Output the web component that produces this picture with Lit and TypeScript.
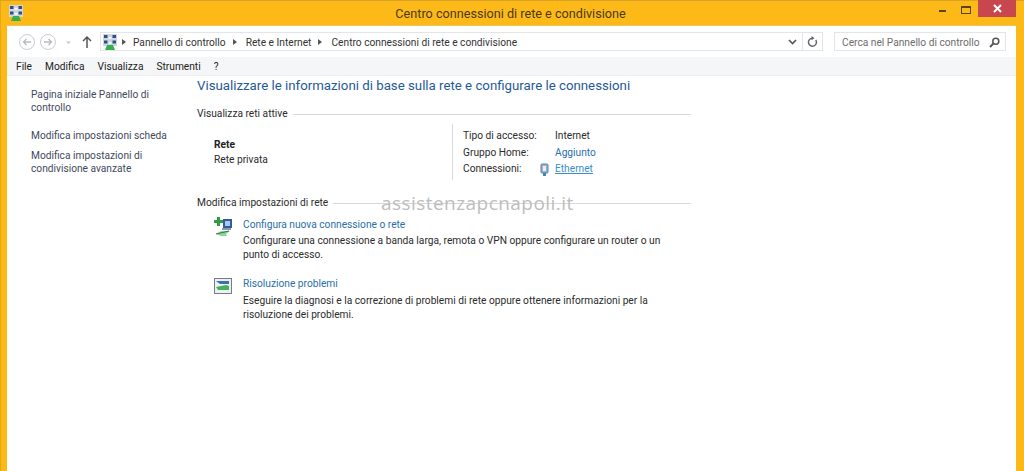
import { LitElement, html, css, svg } from "lit";
import { customElement } from "lit/decorators.js";

const netIcon = svg`<svg width="16" height="16" viewBox="0 0 16 16">
  <rect x="1" y="0" width="14" height="12" fill="#cfd6e2"/>
  <rect x="2" y="1" width="3.5" height="3" fill="#2f4f86"/><rect x="10.5" y="1" width="3.5" height="3" fill="#2f4f86"/>
  <rect x="2" y="6.5" width="3.5" height="3" fill="#2f4f86"/><rect x="10.5" y="6.5" width="3.5" height="3" fill="#2f4f86"/>
  <rect x="6.5" y="3" width="3" height="2" fill="#f2f4f7"/><rect x="6.5" y="8" width="3" height="2" fill="#f2f4f7"/>
  <path d="M5 11h6l2 5H3z" fill="#35b04c"/></svg>`;

@customElement("app-root")
export class AppRoot extends LitElement {
  static styles = css`
    :host { display: block; width: 1024px; height: 471px; overflow: hidden; position: relative;
      background: #fdb917; font-family: Roboto, "Open Sans", sans-serif; font-size: 10.2px; color: #2b2b2b; }
    .frame { display: flex; flex-direction: column; height: 100%; box-shadow: inset 0 1px 0 #d9a32a, inset 1px 0 0 #e3a91c; }
    .titlebar { height: 26px; flex: none; display: grid; grid-template-columns: 1fr auto 1fr; align-items: start; padding: 0 8px 0 7px; }
    .appicon { margin: 5px 0 0 1px; display: block; }
    .title { font-size: 12.65px; line-height: 27px; color: #4a3a10; transform: translateX(-1px); }
    .winbtns { display: flex; justify-content: flex-end; align-items: flex-start; }
    .min { width: 7px; height: 2px; background: #5a4410; margin: 10px 15px 0 0; }
    .max { width: 8px; height: 5px; border: 1px solid #5a4410; border-top-width: 2px; margin: 6px 7px 0 0; }
    .close { width: 38px; height: 17px; background: #c8474f; color: #fff; display: flex; align-items: center; justify-content: center; }
    .window { flex: 1; margin: 0 8px 0 7px; background: #fff; display: flex; flex-direction: column; min-height: 0; box-shadow: 0 -1px 0 #f1c45a; }
    .toolbar { height: 31px; flex: none; display: flex; align-items: center; padding: 0 11px 0 11px; }
    .nav { display: flex; align-items: center; width: 82px; flex: none; }
    .nav svg { display: block; }
    .crumbs { width: 723px; height: 19px; box-sizing: border-box; border: 1px solid #e2e5ea; display: flex; align-items: center; flex: none; }
    .crumbs svg.ni { margin-left: 1px; }
    .crumb { display: flex; align-items: center; white-space: nowrap; color: #333; line-height: 19px; padding-top: 1px; }
    .crumb::before { content: ""; border-left: 4px solid #555; border-top: 3px solid transparent; border-bottom: 3px solid transparent; margin: 0 7px 0 4px; }
    .crumb + .crumb::before { margin: 0 9px 0 7px; }
    .crumbs .spacer { flex: 1; }
    .drop { width: 20px; height: 100%; display: flex; align-items: center; justify-content: center; border-right: 1px solid #e2e5ea; }
    .refresh { width: 19px; display: flex; align-items: center; justify-content: center; }
    .search { margin-left: 11px; width: 172px; height: 19px; box-sizing: border-box; border: 1px solid #e2e5ea; display: flex; align-items: center; justify-content: space-between; padding: 1px 5px 0 7px; color: #6d6d6d; white-space: nowrap; flex: none; }
    .menu { height: 19px; flex: none; background: #f5f6f7; border-bottom: 1px solid #eceef0; display: flex; align-items: center; gap: 13px; padding: 1px 0 0 9px; color: #222; box-sizing: border-box; }
    .main { flex: 1; display: flex; min-height: 0; }
    .side { width: 190px; flex: none; box-sizing: border-box; padding: 12px 10px 0 24px; color: #3e4a5c; line-height: 13px; display: flex; flex-direction: column; }
    .side a:nth-child(2) { margin-top: 15px; }
    .side a:nth-child(3) { margin-top: 7px; }
    .content { width: 494px; flex: none; position: relative; }
    h1 { margin: 0; font-weight: 400; font-size: 13.25px; line-height: 20px; color: #1f5a96; white-space: nowrap; }
    .sect { display: flex; align-items: center; gap: 5px; white-space: nowrap; line-height: 14px; color: #2b2b2b; }
    .sect::after { content: ""; flex: 1; height: 1px; background: #d5d9df; }
    .s1 { margin-top: 11px; }
    .net { display: flex; height: 56px; margin-top: 3px; }
    .netleft { width: 255px; flex: none; padding: 13px 0 0 17px; box-sizing: border-box; line-height: 15px; }
    .netleft b { font-weight: 700; display: block; color: #222; }
    .netright { border-left: 1px solid #d5d9df; padding: 3.6px 0 0 10px; display: grid; grid-template-columns: 92px auto; grid-auto-rows: 16.5px; align-items: center; white-space: nowrap; }
    .blue { color: #2a6fa8; }
    .eth { color: #3a8fc8; text-decoration: underline; position: relative; display: block; }
    .eth svg { position: absolute; left: -15px; top: 0; }
    .s2 { margin-top: 16px; }
    .item { display: flex; margin-left: 16px; }
    .i1 { margin-top: 7px; }
    .i2 { margin-top: 15px; }
    .item svg { flex: none; margin-right: 10px; display: block; }
    .item .t { color: #2a6fa8; line-height: 16px; }
    .item p { margin: 1px 0 0; line-height: 13.5px; width: 425px; color: #2b2b2b; }
    .i2 p { margin-top: 2px; }
    .mark { position: absolute; left: 184px; top: 114px; font-family: "Open Sans", sans-serif; font-size: 19px; line-height: 26px; letter-spacing: .45px; color: #bdbdbd; white-space: nowrap; }
  `;

  render() {
    return html`
      <div class="frame">
        <div class="titlebar">
          <svg class="appicon" width="16" height="16" viewBox="0 0 16 16">${netIcon}</svg>
          <div class="title">Centro connessioni di rete e condivisione</div>
          <div class="winbtns">
            <div class="min"></div><div class="max"></div>
            <div class="close"><svg width="9" height="9" viewBox="0 0 9 9"><path d="M1 1l7 7M8 1L1 8" stroke="#fff" stroke-width="2"/></svg></div>
          </div>
        </div>
        <div class="window">
          <div class="toolbar">
            <div class="nav">
              <svg width="76" height="20" viewBox="0 0 76 20">
                <circle cx="9" cy="10" r="7.5" fill="#fff" stroke="#c9cdd2"/><path d="M13 10H5.5M8.5 7l-3 3 3 3" fill="none" stroke="#b8bcc2" stroke-width="1.4"/>
                <circle cx="30" cy="10" r="7.5" fill="#fff" stroke="#c9cdd2"/><path d="M26 10h7.5M30.5 7l3 3-3 3" fill="none" stroke="#b8bcc2" stroke-width="1.4"/>
                <path d="M48 9.5h5l-2.5 2.5z" fill="#c4c8cc"/>
                <path d="M69 16V5M65 9l4-4 4 4" fill="none" stroke="#555" stroke-width="1.5"/>
              </svg>
            </div>
            <div class="crumbs">
              <svg class="ni" width="16" height="16" viewBox="0 0 16 16">${netIcon}</svg>
              <span class="crumb">Pannello di controllo</span>
              <span class="crumb">Rete e Internet</span>
              <span class="crumb">Centro connessioni di rete e condivisione</span>
              <span class="spacer"></span>
              <span class="drop"><svg width="9" height="6" viewBox="0 0 9 6"><path d="M1 1l3.5 3.5L8 1" fill="none" stroke="#555" stroke-width="1.6"/></svg></span>
              <span class="refresh"><svg width="11" height="12" viewBox="0 0 11 12"><path d="M8.8 4A4 4 0 1 1 5.5 2.2" fill="none" stroke="#666" stroke-width="1.5"/><path d="M4.5 0l3 2.2-3 2z" fill="#666"/></svg></span>
            </div>
            <div class="search">
              <span>Cerca nel Pannello di controllo</span>
              <svg width="11" height="11" viewBox="0 0 11 11"><circle cx="6.8" cy="4.2" r="3" fill="none" stroke="#555" stroke-width="1.5"/><path d="M4.6 6.4L1 10" stroke="#555" stroke-width="2"/></svg>
            </div>
          </div>
          <div class="menu"><span>File</span><span>Modifica</span><span>Visualizza</span><span>Strumenti</span><span>?</span></div>
          <div class="main">
            <div class="side">
              <a>Pagina iniziale Pannello di controllo</a>
              <a>Modifica impostazioni scheda</a>
              <a>Modifica impostazioni di condivisione avanzate</a>
            </div>
            <div class="content">
              <h1>Visualizzare le informazioni di base sulla rete e configurare le connessioni</h1>
              <div class="sect s1">Visualizza reti attive</div>
              <div class="net">
                <div class="netleft"><b>Rete</b>Rete privata</div>
                <div class="netright">
                  <span>Tipo di accesso:</span><span>Internet</span>
                  <span>Gruppo Home:</span><span class="blue">Aggiunto</span>
                  <span>Connessioni:</span>
                  <a class="eth"><svg width="9" height="14" viewBox="0 0 9 14"><rect x="1" y="1" width="7" height="9" rx="1" fill="#9fb2c6" stroke="#5f7f9f"/><rect x="3" y="3" width="3" height="5" fill="#e8eef4"/><rect x="3" y="10" width="3" height="3" fill="#3c86bf"/></svg>Ethernet</a>
                </div>
              </div>
              <div class="sect s2">Modifica impostazioni di rete</div>
              <div class="item i1">
                <svg width="20" height="20" viewBox="0 0 20 20">
                  <rect x="10" y="2" width="9" height="9" fill="#2f5c9f"/><rect x="12" y="4" width="5" height="5" fill="#a9c8ea"/><rect x="9" y="11" width="9" height="2" fill="#8a97a8"/>
                  <path d="M4 0h3v3h3v3H7v3H4V6H1V3h3z" fill="#2f9e3f"/>
                  <path d="M3 17l5-3h9l-4 3 1 2-6 0z" fill="#8fd19b"/><path d="M3 17l13-3" stroke="#2f7c48"/>
                </svg>
                <div><div class="t">Configura nuova connessione o rete</div><p>Configurare una connessione a banda larga, remota o VPN oppure configurare un router o un punto di accesso.</p></div>
              </div>
              <div class="item i2">
                <svg width="20" height="20" viewBox="0 0 20 20">
                  <rect x="1.5" y="2.5" width="17" height="15" fill="#eef1f4" stroke="#737d87"/>
                  <path d="M3 5h13v3H7z" fill="#3f6fae"/><path d="M3 11l10-2 3 1v4H5z" fill="#45b25c"/>
                </svg>
                <div><div class="t">Risoluzione problemi</div><p>Eseguire la diagnosi e la correzione di problemi di rete oppure ottenere informazioni per la risoluzione dei problemi.</p></div>
              </div>
              <div class="mark">assistenzapcnapoli.it</div>
            </div>
          </div>
        </div>
      </div>
    `;
  }
}
